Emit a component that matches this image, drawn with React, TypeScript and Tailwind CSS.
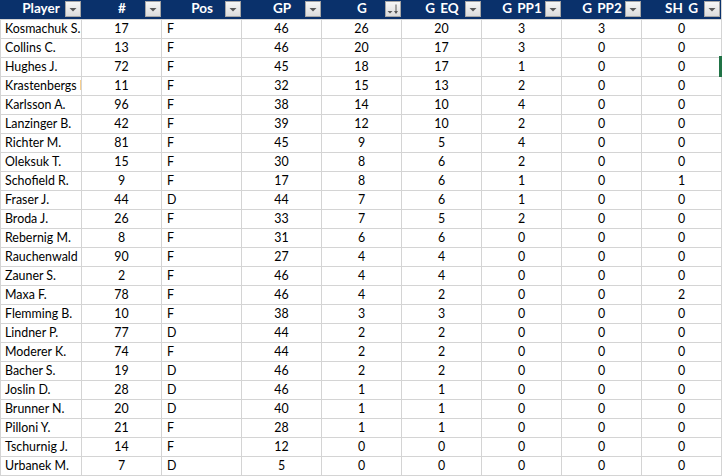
import React from "react";

type Row = [string, number, string, number, number, number, number, number, number];

const rows: Row[] = [
  ["Kosmachuk S.", 17, "F", 46, 26, 20, 3, 3, 0],
  ["Collins C.", 13, "F", 46, 20, 17, 3, 0, 0],
  ["Hughes J.", 72, "F", 45, 18, 17, 1, 0, 0],
  ["Krastenbergs I", 11, "F", 32, 15, 13, 2, 0, 0],
  ["Karlsson A.", 96, "F", 38, 14, 10, 4, 0, 0],
  ["Lanzinger B.", 42, "F", 39, 12, 10, 2, 0, 0],
  ["Richter M.", 81, "F", 45, 9, 5, 4, 0, 0],
  ["Oleksuk T.", 15, "F", 30, 8, 6, 2, 0, 0],
  ["Schofield R.", 9, "F", 17, 8, 6, 1, 0, 1],
  ["Fraser J.", 44, "D", 44, 7, 6, 1, 0, 0],
  ["Broda J.", 26, "F", 33, 7, 5, 2, 0, 0],
  ["Rebernig M.", 8, "F", 31, 6, 6, 0, 0, 0],
  ["Rauchenwald", 90, "F", 27, 4, 4, 0, 0, 0],
  ["Zauner S.", 2, "F", 46, 4, 4, 0, 0, 0],
  ["Maxa F.", 78, "F", 46, 4, 2, 0, 0, 2],
  ["Flemming B.", 10, "F", 38, 3, 3, 0, 0, 0],
  ["Lindner P.", 77, "D", 44, 2, 2, 0, 0, 0],
  ["Moderer K.", 74, "F", 44, 2, 2, 0, 0, 0],
  ["Bacher S.", 19, "D", 46, 2, 2, 0, 0, 0],
  ["Joslin D.", 28, "D", 46, 1, 1, 0, 0, 0],
  ["Brunner N.", 20, "D", 40, 1, 1, 0, 0, 0],
  ["Pilloni Y.", 21, "F", 28, 1, 1, 0, 0, 0],
  ["Tschurnig J.", 14, "F", 12, 0, 0, 0, 0, 0],
  ["Urbanek M.", 7, "D", 5, 0, 0, 0, 0, 0],
];

const headers = ["Player", "#", "Pos", "GP", "G", "G EQ", "G PP1", "G PP2", "SH G"];

const cols = "grid grid-cols-[82px_repeat(8,80px)]";

function FilterButton({ sorted }: { sorted?: boolean }) {
  return (
    <div className="absolute right-[1px] top-[1px] w-[16px] h-[16px] border border-[#a6a6a6] bg-gradient-to-b from-[#f7f7f7] to-[#dcdcdc] flex items-center justify-center">
      {sorted ? (
        <svg width="14" height="14" viewBox="0 0 14 14">
          <polygon points="1.5,9 6.5,9 4,11.5" fill="#595959" />
          <line x1="10" y1="2.5" x2="10" y2="11" stroke="#595959" strokeWidth="1" />
          <polygon points="8,9 12,9 10,12" fill="#595959" />
        </svg>
      ) : (
        <svg width="14" height="14" viewBox="0 0 14 14">
          <polygon points="3.5,6 10.5,6 7,9.5" fill="#595959" />
        </svg>
      )}
    </div>
  );
}

export default function App() {
  return (
    <div
      className="relative w-[722px] h-[476px] overflow-hidden bg-white text-[12.4px] text-black"
      style={{ fontFamily: "Lato, 'Liberation Sans', sans-serif" }}
    >
      {/* Header */}
      <div className={`${cols} h-[20px] border-b border-[#d4d4d4]`}>
        {headers.map((h, i) => (
          <div
            key={h}
            className={`relative h-[19px] bg-[#0a316b] text-white font-bold text-[13.5px] flex items-center justify-center leading-none ${
              i === 8 ? "border-r border-[#d4d4d4]" : ""
            }`}
          >
            <span className="pb-[1px] [word-spacing:2px]">{h}</span>
            <FilterButton sorted={h === "G"} />
          </div>
        ))}
      </div>

      {/* Rows */}
      {rows.map((r) => (
        <div key={r[0]} className={`${cols} h-[19px] border-b border-[#d4d4d4]`}>
          {r.map((v, i) => (
            <div
              key={i}
              className={`flex items-center overflow-hidden whitespace-nowrap border-r border-[#d4d4d4] leading-none ${
                i === 0 ? "border-l pl-[4px]" : i === 2 ? "pl-[5px]" : "justify-center"
              }`}
            >
              {v}
            </div>
          ))}
        </div>
      ))}

      {/* selection marker of the cell beyond the right edge */}
      <div className="absolute left-[719px] top-[56px] w-[3px] h-[21px] bg-[#217346]" />
    </div>
  );
}
